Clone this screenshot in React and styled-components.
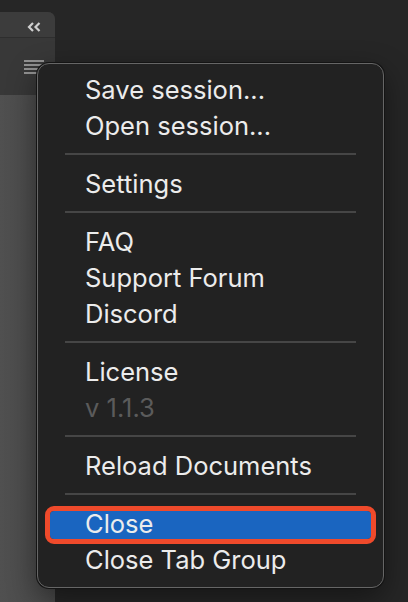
import React from "react"
import styled, { createGlobalStyle } from "styled-components"

const GlobalStyle = createGlobalStyle`
  html, body {
    margin: 0;
    padding: 0;
    background: #262626;
    height: 100%;
    overflow: hidden;
  }
  #root {
    height: 100%;
  }
`

const menuGroups = [
  [{ label: "Save session..." }, { label: "Open session..." }],
  [{ label: "Settings" }],
  [{ label: "FAQ" }, { label: "Support Forum" }, { label: "Discord" }],
  [{ label: "License" }, { label: "v 1.1.3", disabled: true }],
  [{ label: "Reload Documents" }],
  [{ label: "Close", active: true }, { label: "Close Tab Group" }],
]

function HamburgerIcon() {
  return (
    <svg width="20" height="14" viewBox="0 0 20 14">
      {[1, 5, 9, 13].map((y) => (
        <rect key={y} x="0" y={y - 0.8} width="20" height="1.6" fill="#a9a9a9" />
      ))}
    </svg>
  )
}

function CollapseIcon() {
  return (
    <svg width="14" height="10" viewBox="0 0 14 10">
      <path d="M6 1 L2 5 L6 9 M12.5 1 L8.5 5 L12.5 9" stroke="#cfcfcf" strokeWidth="2.2" fill="none" />
    </svg>
  )
}

export default function App() {
  return (
    <Page>
      <GlobalStyle />
      <SidePanel>
        <PanelHeader>
          <CollapseIcon />
        </PanelHeader>
        <PanelToolbar>
          <HamburgerIcon />
        </PanelToolbar>
        <PanelBody />
      </SidePanel>

      <Menu>
        {menuGroups.map((group, i) => (
          <React.Fragment key={i}>
            {i > 0 && <Separator />}
            {group.map((item) => (
              <MenuItem key={item.label} $disabled={item.disabled}>
                {item.active ? <Highlight>{item.label}</Highlight> : item.label}
              </MenuItem>
            ))}
          </React.Fragment>
        ))}
      </Menu>
    </Page>
  )
}

const Page = styled.div`
  position: relative;
  height: 100%;
  display: flex;
  align-items: flex-start;
  font-family: Inter, "Liberation Sans", sans-serif;
`

const SidePanel = styled.div`
  width: 55px;
  margin-top: 12px;
  height: 600px;
  display: flex;
  flex-direction: column;
  border-top-right-radius: 7px;
  overflow: hidden;
  background: #363636;
`

const PanelHeader = styled.div`
  height: 26px;
  box-sizing: border-box;
  display: flex;
  align-items: center;
  justify-content: flex-end;
  padding: 5px 14px 0 0;
  background: #3c3c3c;
  border-bottom: 1px solid #2e2e2e;
`

const PanelToolbar = styled.div`
  height: 57px;
  display: flex;
  justify-content: flex-end;
  padding: 22px 11px 0 0;
  box-sizing: border-box;
  background: #383838;
`

const PanelBody = styled.div`
  flex: 1;
  background: linear-gradient(90deg, #505050 0%, #4a4a4a 100%);
`

const Menu = styled.div`
  position: absolute;
  left: 37px;
  top: 63px;
  width: 347px;
  box-sizing: border-box;
  padding: 7px 0 10px;
  background: #222222;
  border: 1px solid #666666;
  border-radius: 12px;
  box-shadow: 0 0 0 1px #141414, 0 10px 30px rgba(0, 0, 0, 0.45);
`

const MenuItem = styled.div`
  height: 36px;
  display: flex;
  align-items: center;
  padding-left: 47px;
  font-size: 25.5px;
  color: ${(p) => (p.$disabled ? "#5b5b5b" : "#ececec")};
  white-space: nowrap;
`

const Highlight = styled.div`
  margin: 3px 12px 0 -35px;
  flex: 1;
  height: 28px;
  display: flex;
  align-items: center;
  padding-left: 35px;
  padding-bottom: 3px;
  box-sizing: border-box;
  background: #1a65c0;
  border-radius: 4px;
  outline: 5px solid #ef4a2b;
  outline-offset: 0;
`

const Separator = styled.div`
  height: 2px;
  margin: 10px 27px;
  background: #464646;
`
